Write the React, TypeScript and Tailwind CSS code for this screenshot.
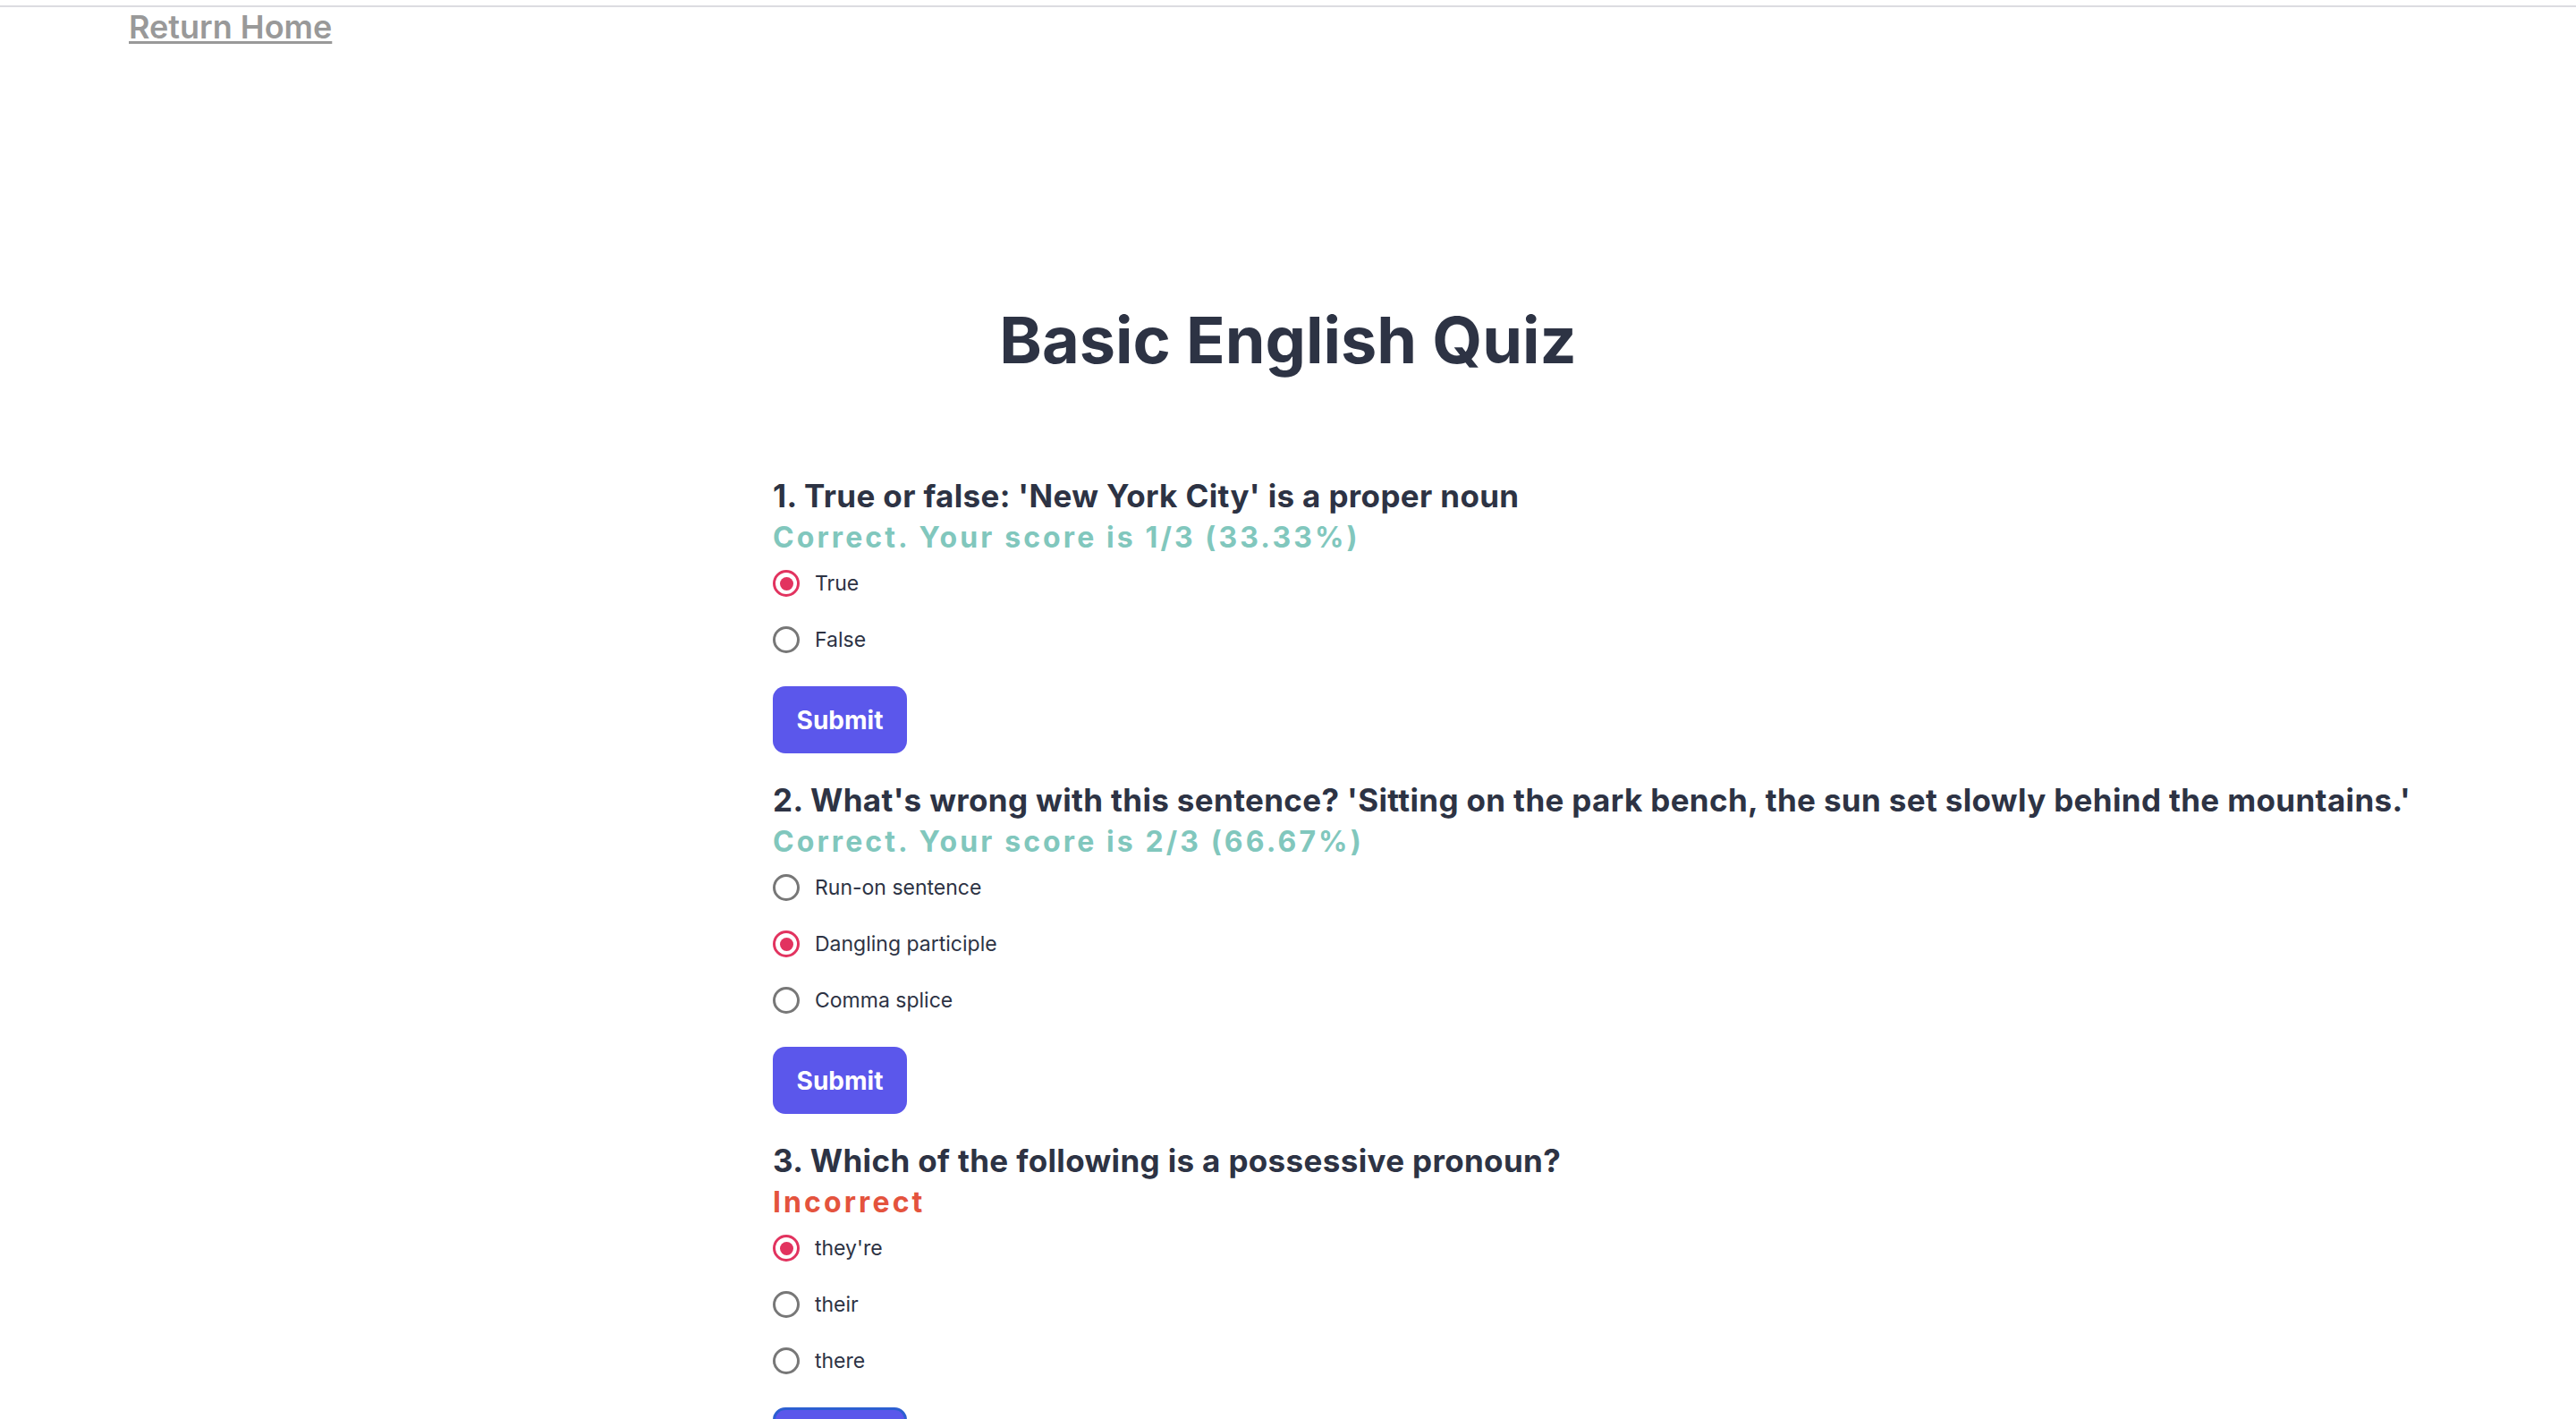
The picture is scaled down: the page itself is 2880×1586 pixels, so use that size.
import React from "react";

type Q = {
  title: string;
  result: string;
  correct: boolean;
  options: string[];
  selected: number;
  focused?: boolean;
};

const questions: Q[] = [
  {
    title: "1. True or false: 'New York City' is a proper noun",
    result: "Correct. Your score is 1/3 (33.33%)",
    correct: true,
    options: ["True", "False"],
    selected: 0,
  },
  {
    title:
      "2. What's wrong with this sentence? 'Sitting on the park bench, the sun set slowly behind the mountains.'",
    result: "Correct. Your score is 2/3 (66.67%)",
    correct: true,
    options: ["Run-on sentence", "Dangling participle", "Comma splice"],
    selected: 1,
  },
  {
    title: "3. Which of the following is a possessive pronoun?",
    result: "Incorrect",
    correct: false,
    options: ["they're", "their", "there"],
    selected: 0,
    focused: true,
  },
];

function Radio({ checked }: { checked: boolean }) {
  return checked ? (
    <span className="flex h-[30px] w-[30px] shrink-0 items-center justify-center rounded-full border-[3px] border-[#e2335f]">
      <span className="h-[15px] w-[15px] rounded-full bg-[#e2335f]" />
    </span>
  ) : (
    <span className="h-[30px] w-[30px] shrink-0 rounded-full border-[3px] border-[#777777]" />
  );
}

export default function App() {
  return (
    <div
      className="min-h-screen bg-white text-[#2d3748]"
      style={{ fontFamily: "Inter, 'Noto Sans', sans-serif" }}
    >
      <div className="h-[8px] border-b-2 border-[#dcdce1]" />
      <div className="pl-[144px]">
        <a
          href="#"
          className="text-[36px] font-semibold leading-[44px] text-[#999999] underline decoration-[3px] underline-offset-[3px]"
        >
          Return Home
        </a>
      </div>
      <h1 className="mt-[292px] text-center text-[72px] font-bold leading-[72px] text-[#2d3344]">
        Basic English Quiz
      </h1>
      <div className="mt-[118px] pl-[864px]">
        {questions.map((q, qi) => (
          <div key={qi} className={qi === 0 ? "" : "mt-[32px]"}>
            <h2 className="whitespace-nowrap text-[35px] font-bold leading-[40px] tracking-[0.01em] text-[#2d3344]">
              {q.title}
            </h2>
            <p
              className={
                q.correct
                  ? "mt-[7px] text-[32px] font-bold leading-[40px] tracking-[3.1px] text-[#81c7bd]"
                  : "mt-[7px] text-[32px] font-bold leading-[40px] tracking-[3.1px] text-[#e4533d]"
              }
            >
              {q.result}
            </p>
            <div className="mt-[15px] flex flex-col gap-[31px]">
              {q.options.map((o, oi) => (
                <label key={oi} className="flex h-[32px] items-center gap-[17px]">
                  <Radio checked={oi === q.selected} />
                  <span className="text-[23px] leading-[32px] text-[#2d3344]">{o}</span>
                </label>
              ))}
            </div>
            <button
              className={
                q.focused
                  ? "mt-[36px] h-[75px] w-[150px] rounded-[14px] border-[3px] border-[#2c5fd1] bg-[#5b57eb] text-[28px] font-bold text-white"
                  : "mt-[36px] h-[75px] w-[150px] rounded-[14px] bg-[#5b57eb] text-[28px] font-bold text-white"
              }
            >
              Submit
            </button>
          </div>
        ))}
      </div>
    </div>
  );
}
